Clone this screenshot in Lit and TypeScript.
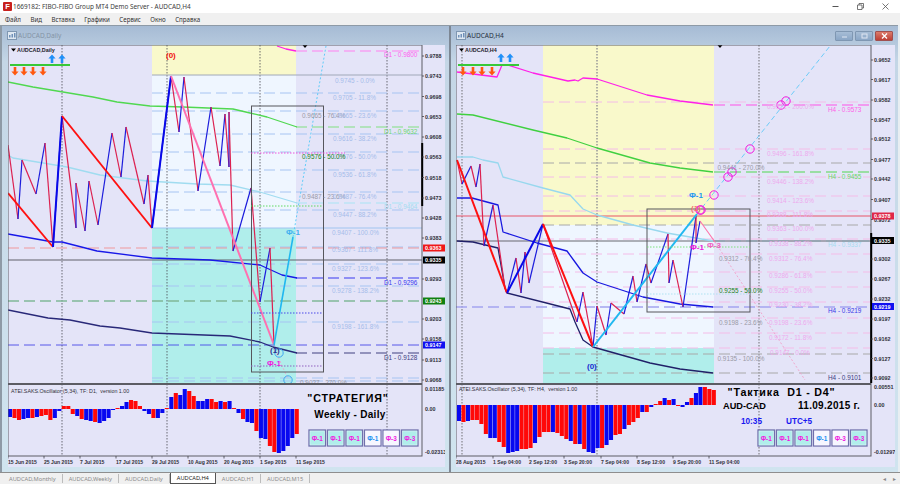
import { LitElement, html, css, svg } from 'lit';
import { customElement, property } from 'lit/decorators.js';

type Pt = [number, number];

interface Line { y: number; a: number; b: number; color: string; w?: number; dash?: string; }
interface Trend { pts: Pt[]; color: string; w: number; dash?: string; }
interface Label { x: number; y: number; text: string; color: string; cls?: string; }
interface Tag { y: number; text: string; bg: string; fg?: string; }
interface Ring { x: number; y: number; color: string; }
interface Btn { text: string; color: string; bg: string; }

interface ChartConfig {
  view: [number, number, number, number];
  left: number;
  right: number;
  bandX: [number, number];
  bands: { y: number; h: number; fill: string }[];
  vdots: number[];
  vdotClass: string;
  lines: Line[];
  averages: Trend[];
  zigzag: Pt[];
  trends: Trend[];
  box: [number, number, number, number];
  dotted: Line[];
  labels: Label[];
  rings: Ring[];
  axis: [number, string][];
  tags: Tag[];
  axisBar: [number, number];
  symbol: string;
  signalLine: [number, number, number];
  upArrows: number[];
  upY: number;
  downArrows: number[];
  downY: number;
  marker: number;
  osc: { zero: number; start: number; pitch: number; bars: [string, number][]; caption: string; captionY: number; hi: [number, string]; lo: [number, string] };
  dates: [number, string][];
  buttons: { x: number; y: number; items: Btn[] };
  notes: Label[];
}

const CYAN = '#b0eeeb';
const WHITE = '#f6f6ff';
const buttons: Btn[] = [
  { text: 'Ф-1', color: '#f018e0', bg: CYAN },
  { text: 'Ф-1', color: '#f018e0', bg: CYAN },
  { text: 'Ф-1', color: '#f018e0', bg: CYAN },
  { text: 'Ф-1', color: '#2090f0', bg: WHITE },
  { text: 'Ф-3', color: '#f018e0', bg: WHITE },
  { text: 'Ф-3', color: '#f018e0', bg: CYAN },
];

// letters r / b are bar colours, second value is the bar height in px (+ up)
const bars = (s: string): [string, number][] =>
  s.split(' ').map(t => [t[0] === 'r' ? '#ff0808' : '#0808f0', Number(t.slice(1))]);

const FIB_D = '#a6c4f2';
const LBL_D = '#a4bcea';
const GREY = '#9a9aa6';

const daily: ChartConfig = {
  view: [8, 45, 437, 422],
  left: 8,
  right: 422,
  bandX: [152, 296],
  bands: [
    { y: 45, h: 30, fill: '#f9f9cb' },
    { y: 75, h: 153, fill: '#eff6ff' },
    { y: 228, h: 155, fill: CYAN },
  ],
  vdots: [62, 167, 260, 387],
  vdotClass: 'vdot',
  lines: [
    { y: 75, a: 152, b: 422, color: '#a0a8b8', w: 1 },
    ...[93, 111, 134, 152, 170, 192, 210, 247, 264, 286, 322, 378, 381].map(y => ({ y, a: 152, b: 422, color: FIB_D, w: 1, dash: '11 5' })),
    { y: 228, a: 152, b: 422, color: '#a0c4f0', w: 1 },
    { y: 51, a: 296, b: 422, color: '#ff80f0', w: 1.2, dash: '11 5' },
    { y: 127, a: 296, b: 422, color: '#80e080', w: 1.2, dash: '11 5' },
    { y: 203, a: 296, b: 422, color: '#a8e4f4', w: 1.2, dash: '11 5' },
    { y: 278, a: 296, b: 422, color: '#3838f0', w: 1, dash: '11 5' },
    { y: 353, a: 296, b: 422, color: '#404080', w: 1, dash: '11 5' },
    { y: 248, a: 8, b: 422, color: '#f0989c', w: 1.2, dash: '11 5' },
    { y: 260, a: 8, b: 422, color: '#60606a', w: 1 },
    { y: 301, a: 8, b: 422, color: '#80b898', w: 1.4, dash: '11 5' },
    { y: 345, a: 8, b: 422, color: '#4848e8', w: 0.9, dash: '11 5' },
  ],
  averages: [
    { color: '#ff20e8', w: 1.3, pts: [[277, 46], [286, 49], [296, 51]] },
    { color: '#50d850', w: 1.3, pts: [[8, 82], [33, 87], [93, 97], [117, 102], [150, 106], [183, 107], [233, 109], [250, 113], [267, 117], [297, 127]] },
    { color: '#a0dcf0', w: 1.3, pts: [[8, 155], [13, 158], [67, 167], [100, 175], [147, 181], [197, 184], [230, 185], [260, 192], [297, 203]] },
    { color: '#1818e8', w: 1.3, pts: [[8, 234], [53, 242], [62, 242], [97, 251], [152, 258], [210, 260], [260, 265], [282, 275], [297, 278]] },
    { color: '#282878', w: 1.3, pts: [[8, 310], [48, 318], [70, 320], [100, 326], [120, 328], [152, 333], [230, 336], [260, 342], [273, 347], [297, 353]] },
  ],
  zigzag: [[8, 145], [18, 219], [22, 160], [36, 194], [45, 143], [53, 247], [62, 116], [76, 228], [76, 183], [85, 231], [89, 181], [98, 225], [112, 133], [121, 177], [126, 127], [144, 204], [148, 175], [152, 228], [171, 76], [179, 132], [184, 77], [198, 191], [211, 107], [220, 166], [225, 114], [229, 167], [229, 112], [233, 251], [251, 188], [260, 302], [270, 248], [274, 345]],
  trends: [
    { color: '#ff1010', w: 1.9, pts: [[8, 193], [53, 247]] },
    { color: '#0808e8', w: 2, pts: [[53, 247], [62, 116]] },
    { color: '#ff1010', w: 1.9, pts: [[62, 116], [152, 228]] },
    { color: '#0808e8', w: 2, pts: [[152, 228], [171, 76]] },
    { color: '#ff70b0', w: 2, pts: [[171, 76], [274, 345]] },
    { color: '#20b8f0', w: 1.6, pts: [[274, 345], [293, 237]] },
    { color: '#60ccf8', w: 1, dash: '2 2', pts: [[293, 237], [326, 46]] },
    { color: '#f0a0c8', w: 0.9, dash: '2 2', pts: [[275, 350], [288, 379]] },
  ],
  box: [251.5, 106, 72, 266],
  dotted: [
    { y: 153, a: 251, b: 345, color: '#f040d8', w: 0.9, dash: '1.5 1.5' },
    { y: 206, a: 251, b: 323, color: '#50d850', w: 0.9, dash: '1.5 1.5' },
    { y: 313, a: 251, b: 323, color: '#4848e8', w: 1, dash: '1.5 1.5' },
    { y: 366, a: 251, b: 323, color: '#9060c0', w: 1, dash: '1.5 1.5' },
  ],
  labels: [
    { x: 335, y: 80, text: '0.9745 - 0.0%', color: LBL_D },
    { x: 333, y: 97.5, text: '0.9705 - 11.8%', color: LBL_D },
    { x: 302, y: 115.5, text: '0.9665 - 76.4%', color: GREY },
    { x: 333, y: 115.5, text: '0.9665 - 23.6%', color: LBL_D },
    { x: 333, y: 138, text: '0.9616 - 38.2%', color: LBL_D },
    { x: 333, y: 156, text: '0.9576 - 50.0%', color: LBL_D },
    { x: 302, y: 156, text: '0.9576 - 50.0%', color: '#208020' },
    { x: 333, y: 174, text: '0.9536 - 61.8%', color: LBL_D },
    { x: 302, y: 196, text: '0.9487 - 23.6%', color: GREY },
    { x: 333, y: 196, text: '0.9487 - 76.4%', color: LBL_D },
    { x: 333, y: 214, text: '0.9447 - 88.2%', color: LBL_D },
    { x: 332, y: 232, text: '0.9407 - 100.0%', color: LBL_D },
    { x: 332, y: 249.5, text: '0.9367 - 111.8%', color: LBL_D },
    { x: 332, y: 268, text: '0.9327 - 123.6%', color: LBL_D },
    { x: 332, y: 290, text: '0.9278 - 138.2%', color: LBL_D },
    { x: 332, y: 326, text: '0.9198 - 161.8%', color: LBL_D },
    { x: 300, y: 382, text: '0.9027 - 270.0%', color: GREY },
    { x: 384, y: 54.5, text: 'D1 - 0.9800', color: '#ff60f0' },
    { x: 384, y: 131, text: 'D1 - 0.9632', color: '#70d870' },
    { x: 384, y: 206, text: 'D1 - 0.9464', color: '#a4dcf0' },
    { x: 384, y: 282, text: 'D1 - 0.9296', color: '#3838f0' },
    { x: 384, y: 357, text: 'D1 - 0.9128', color: '#404080' },
    { x: 166, y: 55, text: '(0)', color: '#f01010', cls: 'mark' },
    { x: 286, y: 232, text: 'Ф-1', color: '#40b0f0', cls: 'mark' },
    { x: 267, y: 363, text: 'Ф-1', color: '#f018e0', cls: 'mark' },
    { x: 270, y: 350, text: '(1)', color: '#303090', cls: 'mark' },
  ],
  rings: [{ x: 279, y: 353, color: '#40a8f0' }, { x: 288, y: 380, color: '#40a8f0' }],
  axis: [[56, '0.9788'], [76, '0.9743'], [96.5, '0.9698'], [116.5, '0.9653'], [137, '0.9608'], [157, '0.9563'], [177.5, '0.9518'], [198, '0.9473'], [218, '0.9428'], [238, '0.9383'], [279, '0.9293'], [319, '0.9203'], [339, '0.9158'], [360, '0.9113'], [380, '0.9068']],
  tags: [
    { y: 248, text: '0.9363', bg: '#f01818' },
    { y: 260, text: '0.9335', bg: '#000000' },
    { y: 301, text: '0.9243', bg: '#108010' },
    { y: 345, text: '0.9147', bg: '#1010f0' },
  ],
  axisBar: [143, 206],
  symbol: 'AUDCAD,Daily',
  signalLine: [10, 70, 65],
  upArrows: [52, 62],
  upY: 59,
  downArrows: [15, 24, 33, 43],
  downY: 71,
  marker: 305,
  osc: {
    zero: 409,
    start: 8,
    pitch: 4.48,
    caption: 'ATEI.SAKS.Oscillator (5,34), TF: D1,  version 1.00',
    captionY: 390.5,
    hi: [389, '0.01185'],
    lo: [452, '-0.02313'],
    bars: bars('b-8 r-9 r-11 b-10 b-9 r-9 b-8 r-7 r-6 r-11 b-9 b-2 r3 r3 r-5 b-7 r-10 b-11 b-12 r-13 b-14 b-12 b-9 b-1 r1 b3 b7 r9 r8 r3 b-2 b-5 r-9 b-9 b-4 r1 b12 r16 b14 b20 r18 r13 b8 b8 b10 r10 r7 b8 r7 b8 r1 b-4 r-10 b-13 b-14 r-22 b-29 b-30 r-37 r-43 b-44 b-42 b-37 b-29 r-25'),
  },
  dates: [[8, '15 Jun 2015'], [44, '25 Jun 2015'], [80, '7 Jul 2015'], [116, '17 Jul 2015'], [152, '29 Jul 2015'], [188, '10 Aug 2015'], [224, '20 Aug 2015'], [260, '1 Sep 2015'], [296, '11 Sep 2015']],
  buttons: { x: 309, y: 430, items: buttons },
  notes: [
    { x: 348, y: 397.5, text: '"СТРАТЕГИЯ"', color: '#000', cls: 'big mid' },
    { x: 350, y: 414.5, text: 'Weekly - Daily', color: '#000', cls: 'sub wide mid' },
  ],
};

const FIB_H = '#f4bce8';
const LBL_H = '#eeaaee';
const GDASH = '#a8a8a8';

const h4: ChartConfig = {
  view: [456, 45, 439, 422],
  left: 456,
  right: 871,
  bandX: [543, 714],
  bands: [
    { y: 45, h: 180, fill: '#f9f9cb' },
    { y: 225, h: 123, fill: '#eff6ff' },
    { y: 348, h: 35, fill: CYAN },
  ],
  vdots: [462, 597, 759],
  vdotClass: 'vdot heavy',
  lines: [
    ...[102, 149, 177, 196, 211, 239, 254, 272, 287, 302, 318, 333, 348].map(y => ({ y, a: 543, b: 871, color: FIB_H, w: 1, dash: '11 5' })),
    ...[163, 225, 354, 373].map(y => ({ y, a: 543, b: 871, color: GDASH, w: 1, dash: '11 5' })),
    { y: 105, a: 714, b: 871, color: '#ff50e8', w: 1, dash: '11 5' },
    { y: 172, a: 714, b: 871, color: '#50d850', w: 1, dash: '11 5' },
    { y: 241, a: 714, b: 871, color: '#a8e4f4', w: 1, dash: '11 5' },
    { y: 216, a: 456, b: 871, color: '#e85468', w: 1.1 },
    { y: 241, a: 456, b: 871, color: '#686870', w: 1 },
    { y: 307, a: 456, b: 871, color: '#a4a4f0', w: 1.6, dash: '11 5' },
  ],
  averages: [
    { color: '#ff20e8', w: 1.3, pts: [[457, 72], [497, 77], [502, 65], [508, 65], [533, 73], [568, 81], [575, 80], [578, 81], [583, 78], [597, 79], [647, 95], [680, 101], [713, 105]] },
    { color: '#40d040', w: 1.3, pts: [[457, 114], [473, 115], [533, 130], [567, 138], [597, 148], [650, 163], [680, 168], [713, 172]] },
    { color: '#98d8ee', w: 1.3, pts: [[457, 157], [473, 157], [483, 160], [498, 163], [503, 177], [543, 188], [570, 195], [583, 209], [597, 215], [633, 225], [667, 233], [713, 241]] },
    { color: '#1818e0', w: 1.3, pts: [[457, 198], [472, 198], [498, 205], [503, 232], [537, 243], [567, 251], [575, 262], [583, 273], [597, 282], [643, 297], [680, 304], [713, 307]] },
    { color: '#202068', w: 1.3, pts: [[457, 241], [473, 242], [498, 248], [505, 288], [507, 293], [570, 309], [575, 322], [583, 340], [593, 347], [650, 363], [680, 369], [713, 373]] },
  ],
  zigzag: [[457, 160], [462, 184], [471, 166], [476, 187], [480, 164], [484, 246], [493, 205], [505, 288], [507, 293], [516, 258], [521, 293], [525, 252], [529, 283], [543, 224], [577, 322], [583, 292], [593, 347], [597, 306], [606, 335], [611, 303], [624, 314], [633, 276], [637, 302], [646, 264], [651, 283], [668, 234], [669, 283], [673, 260], [683, 307], [696, 216], [696, 243], [700, 221]],
  trends: [
    { color: '#ff1010', w: 2, pts: [[457, 160], [507, 293]] },
    { color: '#0808e8', w: 2, pts: [[507, 293], [543, 224]] },
    { color: '#ff1010', w: 2, pts: [[543, 224], [593, 347]] },
    { color: '#20b8f0', w: 2, pts: [[593, 347], [697, 214]] },
    { color: '#60c8f8', w: 0.9, dash: '5 3', pts: [[697, 214], [830, 46]] },
    { color: '#ff70a8', w: 1.1, pts: [[700, 221], [715, 242]] },
    { color: '#f0a0c8', w: 0.9, dash: '2 2', pts: [[715, 242], [805, 380]] },
  ],
  box: [647, 209, 103, 103],
  dotted: [
    { y: 247, a: 647, b: 750, color: '#70e070', w: 0.9, dash: '1.5 1.5' },
    { y: 294, a: 647, b: 750, color: '#a8e0f0', w: 0.9, dash: '1.5 1.5' },
  ],
  labels: [
    { x: 767, y: 106, text: '0.9521 - 200.0%', color: LBL_H },
    { x: 767, y: 153, text: '0.9496 - 161.8%', color: LBL_H },
    { x: 767, y: 181, text: '0.9446 - 138.2%', color: LBL_H },
    { x: 767, y: 200, text: '0.9414 - 123.6%', color: LBL_H },
    { x: 767, y: 214, text: '0.9388 - 111.8%', color: LBL_H },
    { x: 767, y: 228, text: '0.9363 - 100.0%', color: LBL_H },
    { x: 769, y: 243, text: '0.9338 - 88.2%', color: LBL_H },
    { x: 769, y: 258, text: '0.9312 - 76.4%', color: LBL_H },
    { x: 769, y: 275.5, text: '0.9286 - 61.8%', color: LBL_H },
    { x: 769, y: 290, text: '0.9255 - 50.0%', color: LBL_H },
    { x: 769, y: 304.5, text: '0.9230 - 38.2%', color: LBL_H },
    { x: 769, y: 322, text: '0.9198 - 23.6%', color: LBL_H },
    { x: 769, y: 337, text: '0.9172 - 11.8%', color: LBL_H },
    { x: 770, y: 352, text: '0.9147 - 0.0%', color: LBL_H },
    { x: 717.5, y: 167.5, text: '0.9441 - 270.0%', color: GREY },
    { x: 719, y: 258, text: '0.9312 - 76.4%', color: GREY },
    { x: 719, y: 290, text: '0.9255 - 50.0%', color: '#208020' },
    { x: 719, y: 322, text: '0.9198 - 23.6%', color: GREY },
    { x: 717.5, y: 358, text: '0.9135 - 100.0%', color: GREY },
    { x: 828, y: 109.5, text: 'H4 - 0.9573', color: '#ff60e8' },
    { x: 828, y: 176, text: 'H4 - 0.9455', color: '#68d868' },
    { x: 828, y: 244, text: 'H4 - 0.9337', color: '#a4dcf0' },
    { x: 828, y: 310, text: 'H4 - 0.9219', color: '#3838e8' },
    { x: 828, y: 377, text: 'H4 - 0.9101', color: '#404080' },
    { x: 689, y: 195, text: 'Ф-1', color: '#2098f0', cls: 'mark' },
    { x: 587, y: 366, text: '(0)', color: '#1828d0', cls: 'mark' },
    { x: 691, y: 208, text: '(1)', color: '#f07070', cls: 'mark' },
    { x: 690, y: 247, text: 'Ф-1', color: '#f018e0', cls: 'mark' },
    { x: 707, y: 245, text: 'Ф-3', color: '#f060c0', cls: 'mark' },
  ],
  rings: [
    { x: 714, y: 195, color: '#f018e0' }, { x: 700, y: 210, color: '#f018e0' }, { x: 701, y: 210, color: '#f018e0' },
    { x: 728, y: 177, color: '#f018e0' }, { x: 732, y: 172, color: '#f018e0' }, { x: 750, y: 149, color: '#f018e0' },
    { x: 781, y: 105, color: '#f018e0' }, { x: 786, y: 101, color: '#f018e0' },
  ],
  axis: [[60, '0.9652'], [79.5, '0.9617'], [100, '0.9582'], [119.5, '0.9547'], [139, '0.9512'], [159.5, '0.9477'], [179, '0.9442'], [199.5, '0.9407'], [219.5, '0.9372'], [259, '0.9302'], [279, '0.9267'], [299, '0.9232'], [319, '0.9197'], [339, '0.9162'], [358.5, '0.9127'], [378, '0.9092']],
  tags: [
    { y: 216, text: '0.9378', bg: '#e02848' },
    { y: 240.5, text: '0.9335', bg: '#000000' },
    { y: 306.5, text: '0.9219', bg: '#1010f0' },
  ],
  axisBar: [233, 383],
  symbol: 'AUDCAD,H4',
  signalLine: [458, 519, 65],
  upArrows: [501, 510],
  upY: 58,
  downArrows: [463, 473, 482, 492],
  downY: 71,
  marker: 720,
  osc: {
    zero: 405,
    start: 457,
    pitch: 4.47,
    caption: 'ATEI.SAKS.Oscillator (5,34), TF: H4,  version 1.00',
    captionY: 389,
    hi: [387, '0.00551'],
    lo: [452, '-0.01297'],
    bars: bars('b-16 r-17 b-16 r-15 r-15 r-19 r-29 b-33 b-33 r-37 r-42 b-48 b-47 b-46 r-44 r-44 r-43 b-38 r-32 r-27 r-27 b-27 r-28 r-31 r-34 b-36 r-39 b-39 r-44 b-47 b-48 b-43 r-43 b-40 b-35 r-30 r-29 b-24 r-20 r-17 r-13 b-7 r-7 b-2 r1 r4 b7 r5 b6 r-1 b-2 b3 r7 b12 b18 r18 r16 r15'),
  },
  dates: [[456, '28 Aug 2015'], [493, '1 Sep 04:00'], [529, '2 Sep 12:00'], [564, '3 Sep 20:00'], [601, '7 Sep 04:00'], [637, '8 Sep 12:00'], [673, '9 Sep 20:00'], [709, '11 Sep 04:00']],
  buttons: { x: 758, y: 430, items: buttons },
  notes: [
    { x: 781.5, y: 392, text: '"Тактика  D1 - D4"', color: '#000', cls: 'big mid' },
    { x: 723, y: 405.5, text: 'AUD-CAD', color: '#000', cls: 'sub' },
    { x: 798, y: 405.5, text: '11.09.2015 г.', color: '#000', cls: 'sub wide' },
    { x: 741, y: 421, text: '10:35', color: '#1818f0', cls: 'sub small' },
    { x: 786, y: 421, text: 'UTC+5', color: '#1818f0', cls: 'sub small' },
  ],
};

@customElement('chart-panel')
export class ChartPanel extends LitElement {
  static styles = css`
    :host { display: block; flex: none; }
    svg { display: block; font-family: 'Liberation Sans', Arial, sans-serif; }
    text { dominant-baseline: central; white-space: pre; }
    .lbl { font-size: 6.4px; }
    .ax { font-size: 5.4px; fill: #303038; font-weight: 700; }
    .tag { font-size: 5.4px; font-weight: 700; fill: #fff; }
    .cap { font-size: 5.3px; fill: #303038; }
    .date { font-size: 5.1px; fill: #303038; font-weight: 700; }
    .mark { font-size: 8px; font-weight: 700; }
    .big { font-size: 10.7px; font-weight: 700; letter-spacing: 0.8px; }
    .sub { font-size: 9.2px; font-weight: 700; }
    .wide { font-size: 10px; letter-spacing: 0.3px; }
    .small { font-size: 8.2px; }
    .mid { text-anchor: middle; }
    .btxt { font-size: 6.4px; font-weight: 700; text-anchor: middle; }
    .sym { font-size: 5.4px; fill: #202028; font-weight: 700; }
    .vdot { stroke: #4a4a50; stroke-width: 0.8; stroke-dasharray: 1.5 1.5; fill: none; }
    .heavy { stroke: #8a8a92; stroke-width: 1.3; }
    .frame { stroke: #5c5c64; fill: none; stroke-width: 1; }
    .split { stroke: #5c5c64; stroke-width: 2; }
    .box { stroke: #56565c; stroke-width: 1; fill: none; }
    .bevel { stroke: #7070ac; stroke-width: 1.3; }
    .inner { fill: none; stroke: #ffffff; stroke-opacity: 0.55; stroke-width: 0.6; }
  `;

  @property({ type: Object }) config!: ChartConfig;

  private dashLine(l: Line) {
    return svg`<line x1=${l.a} x2=${l.b} y1=${l.y} y2=${l.y} stroke=${l.color} stroke-width=${l.w ?? 0.9} stroke-dasharray=${l.dash ?? 'none'}></line>`;
  }

  private trend(t: Trend) {
    return svg`<polyline fill="none" points=${t.pts.map(p => p.join(',')).join(' ')} stroke=${t.color} stroke-width=${t.w} stroke-dasharray=${t.dash ?? 'none'} stroke-linejoin="round"></polyline>`;
  }

  private arrows(xs: number[], y: number, up: boolean) {
    const d = up ? 1 : -1;
    const fill = up ? '#2090f8' : '#ff5810';
    return xs.map(x => svg`<path fill=${fill} d="M${x} ${y - 4.5 * d}L${x + 3.6} ${y - 0.6 * d}H${x + 1.3}V${y + 4 * d}H${x - 1.3}V${y - 0.6 * d}H${x - 3.6}Z"></path>`);
  }

  render() {
    const c = this.config;
    const [vx, vy, vw, vh] = c.view;
    const segs = c.zigzag.slice(1).map((p, i) => {
      const q = c.zigzag[i];
      return svg`<line x1=${q[0]} y1=${q[1]} x2=${p[0]} y2=${p[1]} stroke=${p[1] < q[1] ? '#1c1cdc' : '#dc2050'} stroke-width="1.2"></line>`;
    });
    return html`<svg width=${vw} height=${vh} viewBox="${vx} ${vy} ${vw} ${vh}">
      <rect x=${vx} y=${vy} width=${vw} height=${vh} fill="#e4e4f8"></rect>
      ${c.bands.map(b => svg`<rect x=${c.bandX[0]} y=${b.y} width=${c.bandX[1] - c.bandX[0]} height=${b.h} fill=${b.fill}></rect>`)}
      ${c.vdots.map(x => svg`<line class=${c.vdotClass} x1=${x} x2=${x} y1="45" y2="456"></line>`)}
      ${c.lines.map(l => this.dashLine(l))}
      ${c.averages.map(t => this.trend(t))}
      ${segs}
      ${c.trends.map(t => this.trend(t))}
      <rect class="box" x=${c.box[0]} y=${c.box[1]} width=${c.box[2]} height=${c.box[3]}></rect>
      ${c.dotted.map(l => this.dashLine(l))}
      ${c.rings.map(r => svg`<circle cx=${r.x} cy=${r.y} r="4.2" fill="none" stroke=${r.color} stroke-width="1"></circle>`)}
      ${c.labels.map(l => svg`<text x=${l.x} y=${l.y} fill=${l.color} class=${l.cls ?? 'lbl'}>${l.text}</text>`)}

      <rect x=${c.signalLine[0]} y=${c.signalLine[2] - 1} width=${c.signalLine[1] - c.signalLine[0]} height="2" fill="#38c838"></rect>
      ${this.arrows(c.upArrows, c.upY, true)}
      ${this.arrows(c.downArrows, c.downY, false)}
      <path d="M${c.left + 3} 48.5h5l-2.5 3z" fill="#000"></path>
      <text class="sym" x=${c.left + 9} y="50">${c.symbol}</text>
      <path d="M${c.marker - 2.5} 45h5l-2.5 3z" fill="#000"></path>

      ${c.osc.bars.map(([col, v], i) => svg`<rect x=${c.osc.start + c.osc.pitch * i} y=${v > 0 ? c.osc.zero - v : c.osc.zero} width=${c.osc.pitch - 0.4} height=${Math.abs(v)} fill=${col}></rect>`)}
      <text class="cap" x=${c.left + 3} y=${c.osc.captionY}>${c.osc.caption}</text>

      <rect class="frame" x=${c.left} y="45" width=${c.right - c.left} height="411"></rect>
      <line class="split" x1=${c.left} x2=${c.right} y1="384" y2="384"></line>
      <rect x=${c.right - 0.8} y=${c.axisBar[0]} width="2" height=${c.axisBar[1] - c.axisBar[0]} fill="#000"></rect>

      ${c.axis.map(([y, t]) => svg`
        <line x1=${c.right} x2=${c.right + 2} y1=${y} y2=${y} stroke="#404048" stroke-width="0.8"></line>
        <text class="ax" x=${c.right + 3} y=${y}>${t}</text>`)}
      ${c.tags.map(t => svg`
        <rect x=${c.right + 1} y=${t.y - 3.5} width="22" height="7" fill=${t.bg}></rect>
        <text class="tag" x=${c.right + 3} y=${t.y}>${t.text}</text>`)}

      <text class="ax" x=${c.right + 3} y=${c.osc.hi[0]}>${c.osc.hi[1]}</text>
      <text class="ax" x=${c.right + 3} y=${c.osc.zero}>0.00</text>
      <text class="ax" x=${c.right + 3} y=${c.osc.lo[0]}>${c.osc.lo[1]}</text>
      ${c.dates.map(([x, t]) => svg`
        <line x1=${x} x2=${x} y1="456" y2="458.5" stroke="#404048" stroke-width="0.8"></line>
        <text class="date" x=${x} y="461.5">${t}</text>`)}

      ${c.notes.map(l => svg`<text x=${l.x} y=${l.y} fill=${l.color} class=${l.cls ?? 'lbl'}>${l.text}</text>`)}
      ${c.buttons.items.map((b, i) => {
        const x = c.buttons.x + i * 18.5;
        return svg`
          <rect class="bevel" x=${x} y=${c.buttons.y} width="16.5" height="16" fill=${b.bg}></rect>
          <rect class="inner" x=${x + 1} y=${c.buttons.y + 1} width="14.5" height="14"></rect>
          <text class="btxt" x=${x + 8.2} y=${c.buttons.y + 8} fill=${b.color}>${b.text}</text>`;
      })}
    </svg>`;
  }
}

@customElement('chart-window')
export class ChartWindow extends LitElement {
  static styles = css`
    :host { display: block; flex: none; }
    .win {
      display: flex;
      flex-direction: column;
      height: 100%;
      box-sizing: border-box;
    }
    .head {
      flex: none;
      height: 19px;
      display: flex;
      align-items: center;
      gap: 1px;
      font: 6.5px 'Noto Sans', 'Liberation Sans', sans-serif;
      color: #8494a6;
      padding-right: 2px;
      margin-left: -1px;
    }
    .active { color: #26303c; margin-left: 0; }
    .grow { flex: 1; }
    .wb {
      width: 18px;
      height: 10px;
      margin-left: 1px;
      border: 1px solid #7f97b2;
      border-radius: 1px;
      box-sizing: border-box;
      background: linear-gradient(#a6bdd6, #8aa6c6);
      display: flex;
      align-items: center;
      justify-content: center;
    }
    .wb.close { background: linear-gradient(#dc7c6c, #bd3f36); border-color: #a05050; }
    .body { flex: none; }
  `;

  @property() heading = '';
  @property({ type: Boolean }) active = false;
  @property({ type: Object }) config!: ChartConfig;

  render() {
    return html`<div class="win">
      <div class="head ${this.active ? 'active' : ''}">
        <svg width="10" height="9" viewBox="0 0 10 9"><rect x="0.5" y="0.5" width="9" height="8" fill="#dfe8f2" stroke="#7f97b2"></rect><path d="M2 6.5h1.5V4H2zM4.5 6.5H6V3H4.5zM7 6.5h1.5V2H7z" fill="#6f90b8"></path></svg>
        <span>${this.heading}</span>
        <span class="grow"></span>
        ${this.active ? html`
          <span class="wb"><svg width="7" height="5" viewBox="0 0 7 5"><path d="M1 3.5h5v1H1z" fill="#dfe6f2"></path></svg></span>
          <span class="wb"><svg width="7" height="6" viewBox="0 0 7 6"><rect x="1" y="1" width="5" height="4" fill="none" stroke="#dfe6f2"></rect></svg></span>
          <span class="wb close"><svg width="7" height="6" viewBox="0 0 7 6"><path d="M1 0.5l5 5M6 0.5l-5 5" stroke="#fff" stroke-width="1.3"></path></svg></span>
        ` : ''}
      </div>
      <chart-panel class="body" .config=${this.config}></chart-panel>
    </div>`;
  }
}

const menu = ['Файл', 'Вид', 'Вставка', 'Графики', 'Сервис', 'Окно', 'Справка'];
const tabs = ['AUDCAD,Monthly', 'AUDCAD,Weekly', 'AUDCAD,Daily', 'AUDCAD,H4', 'AUDCAD,H1', 'AUDCAD,M15'];

@customElement('app-root')
export class AppRoot extends LitElement {
  static styles = css`
    :host {
      display: flex;
      flex-direction: column;
      width: 900px;
      height: 484px;
      overflow: hidden;
      font-family: 'Noto Sans', 'Liberation Sans', sans-serif;
      background: #f0f0f0;
    }
    .titlebar {
      flex: none;
      height: 13px;
      display: flex;
      align-items: center;
      background: #fff;
      font-size: 6.4px;
      color: #3c3c3c;
      padding-left: 3px;
    }
    .logo {
      width: 9px;
      height: 9px;
      margin-right: 1px;
      background: #c8201c;
      color: #fff;
      font: 700 7.5px/9px 'Liberation Sans', sans-serif;
      text-align: center;
      border-radius: 1px;
    }
    .grow { flex: 1; }
    .ctl { display: flex; gap: 18px; margin-right: 11px; align-items: center; }
    .menu {
      flex: none;
      height: 12px;
      display: flex;
      align-items: center;
      gap: 9.4px;
      padding-left: 5px;
      background: #f0f0f0;
      font-size: 6.2px;
      color: #303030;
    }
    .mdi {
      flex: none;
      height: 447px;
      display: flex;
      background: #8e9aa6;
      padding: 1px 0 0 2px;
      border-right: 2px solid #e8eef2;
      box-sizing: border-box;
    }
    .mdi .left { width: 447px; padding: 0 4px 4px 6px; box-sizing: border-box; }
    .mdi .gap { flex: none; width: 2px; background: #7d8794; }
    .mdi .right { width: 447px; padding: 0 3px 4px 5px; box-sizing: border-box; }
    .pane { flex: none; background: linear-gradient(#a6bbd4, #c4d6e6 8%, #d0e4ef); }
    .tabs {
      flex: none;
      height: 12px;
      display: flex;
      align-items: stretch;
      background: #f0f0f0;
      border-top: 1px solid #8e8e8e;
      font-size: 5.7px;
      color: #8a8a8a;
      box-sizing: border-box;
      padding-left: 3px;
    }
    .tab { display: flex; align-items: center; padding: 0 6px; border-right: 1px solid #bcbcbc; height: 9px; align-self: center; }
    .tab.on { height: 11px; background: #fff; color: #222; border: 1px solid #555; border-top: none; align-self: flex-start; box-sizing: border-box; }
    .nav { margin-left: auto; margin-right: 3px; display: flex; gap: 5px; align-items: center; font-size: 5px; color: #888; }
  `;

  render() {
    return html`
      <div class="titlebar">
        <span class="logo">F</span>
        <span>1669182: FIBO-FIBO Group MT4 Demo Server - AUDCAD,H4</span>
        <span class="grow"></span>
        <div class="ctl">
          <svg width="7" height="7" viewBox="0 0 7 7"><path d="M0.5 3.5h6" stroke="#555"></path></svg>
          <svg width="7" height="7" viewBox="0 0 7 7"><path d="M0.5 2h4.5v4.5h-4.5zM2 2V0.5h4.5V5H5" fill="none" stroke="#555" stroke-width="0.8"></path></svg>
          <svg width="7" height="7" viewBox="0 0 7 7"><path d="M0.5 0.5l6 6M6.5 0.5l-6 6" stroke="#555" stroke-width="0.8"></path></svg>
        </div>
      </div>
      <div class="menu">
        ${menu.map(m => html`<span>${m}</span>`)}
      </div>
      <div class="mdi">
        <chart-window class="pane left" heading="AUDCAD,Daily" .config=${daily}></chart-window>
        <div class="gap"></div>
        <chart-window class="pane right" heading="AUDCAD,H4" active .config=${h4}></chart-window>
      </div>
      <div class="tabs">
        ${tabs.map((t, i) => html`<span class="tab ${i === 3 ? 'on' : ''}">${t}</span>`)}
        <span class="nav"><span>◄</span><span>►</span></span>
      </div>
    `;
  }
}
